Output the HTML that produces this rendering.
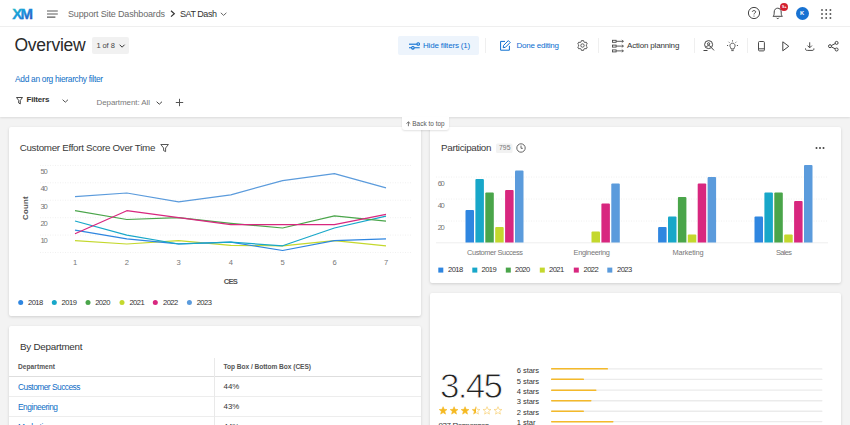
<!DOCTYPE html>
<html><head><meta charset="utf-8">
<style>
*{box-sizing:border-box;margin:0;padding:0}
html,body{width:850px;height:425px;overflow:hidden;background:#f3f3f3;font-family:"Liberation Sans",sans-serif;color:#333}
.abs{position:absolute}
#top{position:absolute;left:0;top:0;width:850px;height:27px;background:#fff;border-bottom:1px solid #efefef}
#hdr{position:absolute;left:0;top:27px;width:850px;height:90px;background:#fff;box-shadow:0 1px 2px rgba(0,0,0,.10)}
.t{position:absolute;white-space:nowrap;line-height:1}
.card{position:absolute;background:#fff;border-radius:2px;box-shadow:0 1px 3px rgba(0,0,0,.15)}
svg{position:absolute;overflow:visible}
.sep{position:absolute;width:1px;background:#efefef}
.hl{position:absolute;height:1px;background:#ededed}
</style></head><body>
<div id="hdr"></div>
<div id="top"></div>

<!-- top bar icons -->
<svg style="left:0;top:0" width="40" height="27"><defs><linearGradient id="lg" x1="0" y1="0" x2="1" y2="1"><stop offset="0.1" stop-color="#22bcc6"/><stop offset="0.5" stop-color="#1b93dd"/><stop offset="0.95" stop-color="#2a4cbc"/></linearGradient></defs><text x="12.3" y="18.9" font-family="Liberation Sans, sans-serif" font-weight="700" font-size="15" letter-spacing="-1.9" fill="url(#lg)" stroke="url(#lg)" stroke-width=".35">XM</text></svg>
<svg style="left:46.8px;top:9.5px" width="12" height="10"><path d="M0 1H10.8M0 4H10.8M0 7.1H8.4" stroke="#5a5a5a" stroke-width="1.15" fill="none"/></svg>
<svg style="left:169.5px;top:10px" width="6" height="8"><path d="M1 0.8L4.3 3.7L1 6.6" stroke="#333" stroke-width="1.2" fill="none"/></svg>
<svg style="left:220px;top:11.5px" width="8" height="6"><path d="M0.8 0.8L3.6 3.4L6.4 0.8" stroke="#666" stroke-width="1" fill="none"/></svg>
<!-- help -->
<svg style="left:747px;top:6.2px" width="14" height="14"><circle cx="7" cy="7" r="5.6" stroke="#444" stroke-width="1" fill="none"/><path d="M5.3 5.8C5.3 4.2 8.7 4.2 8.7 5.9C8.7 7 7 7 7 8.4" stroke="#444" stroke-width="1" fill="none"/><circle cx="7" cy="10" r=".6" fill="#444"/></svg>
<!-- bell -->
<svg style="left:772px;top:7px" width="12" height="13"><path d="M1 9.3C2.3 8.3 2.2 6.5 2.2 5C2.2 2.6 3.8 1.2 5.7 1.2C7.6 1.2 9.2 2.6 9.2 5C9.2 6.5 9.1 8.3 10.4 9.3Z" stroke="#444" stroke-width="1" fill="none" stroke-linejoin="round"/><path d="M4.5 10.8C4.9 11.8 6.5 11.8 6.9 10.8" stroke="#444" stroke-width="1" fill="none"/></svg>
<div class="abs" style="left:780.4px;top:2.8px;width:8px;height:8px;border-radius:50%;background:#d3202f"></div>
<div class="t" style="left:782px;top:4.8px;font-size:4px;font-weight:700;color:#fff">9+</div>
<!-- avatar -->
<div class="abs" style="left:795.8px;top:6.5px;width:13px;height:13px;border-radius:50%;background:#1872d2"></div>
<div class="t" style="left:800.1px;top:10.9px;font-size:5.8px;font-weight:700;color:#fff">K</div>
<!-- grid -->
<svg style="left:821px;top:8.6px" width="11" height="11"><g fill="#555"><circle cx="1" cy="1" r=".95"/><circle cx="5.2" cy="1" r=".95"/><circle cx="9.4" cy="1" r=".95"/><circle cx="1" cy="5" r=".95"/><circle cx="5.2" cy="5" r=".95"/><circle cx="9.4" cy="5" r=".95"/><circle cx="1" cy="9" r=".95"/><circle cx="5.2" cy="9" r=".95"/><circle cx="9.4" cy="9" r=".95"/></g></svg>

<!-- title row -->
<div class="abs" style="left:91.8px;top:37px;width:36.8px;height:16.6px;background:#f1f1f1;border-radius:2px"></div>
<svg style="left:119px;top:44px" width="8" height="6"><path d="M0.6 0.7L3.1 3.2L5.6 0.7" stroke="#333" stroke-width="1" fill="none"/></svg>

<!-- toolbar -->
<div class="abs" style="left:398px;top:36px;width:81px;height:19px;background:#edf4fc;border-radius:2px"></div>
<svg style="left:408.8px;top:41px" width="12" height="10"><g stroke="#0b6ed0" stroke-width="1.1" fill="none"><path d="M0 3.2H7.8"/><circle cx="9.2" cy="3" r="1.3"/><path d="M0 6.8H2.4M5.4 6.8H10.7"/><circle cx="3.9" cy="6.8" r="1.3"/></g></svg>
<div class="sep" style="left:485px;top:38px;height:15px;background:#efefef"></div>
<svg style="left:499.5px;top:40px" width="11" height="11"><g stroke="#0b6ed0" stroke-width="1" fill="none"><path d="M5 1.4H0.6V10.2H9.4V5.8"/><path d="M8.3 0.6L10.2 2.5L5.4 7.3L3.2 7.7L3.6 5.4Z" stroke-linejoin="round"/></g></svg>
<svg style="left:577.2px;top:40.3px" width="11" height="11"><g stroke="#555" stroke-width=".95" fill="none"><path d="M4.38 0.63L6.62 0.63L6.83 1.84L8.01 2.51L9.16 2.09L10.28 4.04L9.34 4.82L9.34 6.18L10.28 6.96L9.16 8.91L8.01 8.49L6.83 9.16L6.62 10.37L4.38 10.37L4.17 9.16L2.99 8.49L1.84 8.91L0.72 6.96L1.66 6.18L1.66 4.82L0.72 4.04L1.84 2.09L2.99 2.51L4.17 1.84Z" stroke-linejoin="round"/><circle cx="5.5" cy="5.5" r="1.7"/></g></svg>
<div class="sep" style="left:598px;top:38px;height:15px"></div>
<svg style="left:612.3px;top:39.8px" width="12" height="12"><g stroke="#4a4a4a" stroke-width=".9" fill="none"><rect x=".5" y=".3" width="3.6" height="2"/><rect x=".5" y="5.1" width="3.6" height="2"/><rect x=".5" y="9.9" width="3.6" height="2"/><path d="M4.1 1.3H11.4M4.1 6.1H11.4M4.1 10.9H11.4"/><path d="M9.8 0L11.4 1.3L9.8 2.6M9.8 4.8L11.4 6.1L9.8 7.4M9.8 9.6L11.4 10.9L9.8 12.2" stroke-width=".8"/></g></svg>
<div class="sep" style="left:694px;top:38px;height:15px"></div>
<svg style="left:703px;top:40px" width="12" height="12"><g stroke="#444" stroke-width="1" fill="none"><circle cx="5.6" cy="4.6" r="4"/><path d="M8.4 7.6L11 10.4"/><circle cx="5.6" cy="3.8" r="1.1"/><path d="M3.4 6.9C3.6 5.2 7.6 5.2 7.8 6.9"/><path d="M0.5 10.5H4.5"/></g></svg>
<svg style="left:727.3px;top:40.4px" width="12" height="13"><g stroke="#444" stroke-width=".9" fill="none"><path d="M4 9V8C2.3 6.6 2.6 3.2 5.5 3.2C8.4 3.2 8.7 6.6 7 8V9Z" stroke-linejoin="round"/><path d="M4.3 10.6H6.7M5.5 0.3V1.5M1.6 1.8L2.4 2.6M9.4 1.8L8.6 2.6M0 5.5H1.1M9.9 5.5H11"/></g></svg>
<div class="sep" style="left:747px;top:38px;height:15px"></div>
<svg style="left:758.1px;top:41px" width="8" height="12"><g stroke="#4a4a4a" stroke-width="1" fill="none"><rect x=".5" y=".5" width="5.9" height="9.4" rx="1"/><path d="M.5 7.8H6.4"/></g></svg>
<svg style="left:782.4px;top:40.5px" width="8" height="11"><path d="M0.8 0.8L6.8 5.3L0.8 9.8Z" stroke="#444" stroke-width="1" fill="none" stroke-linejoin="round"/></svg>
<svg style="left:805.2px;top:41.5px" width="10" height="10"><g stroke="#4a4a4a" stroke-width="1" fill="none"><path d="M4.7 0.3V5.6M2.5 3.6L4.7 5.8L6.9 3.6"/><path d="M0.5 6.4C0.5 8.2 1 8.4 2.4 8.4H7C8.4 8.4 8.9 8.2 8.9 6.4"/></g></svg>
<svg style="left:827.9px;top:40.8px" width="11" height="11"><g stroke="#444" stroke-width="1" fill="none"><circle cx="2" cy="5.2" r="1.5"/><circle cx="8.6" cy="1.9" r="1.5"/><circle cx="8.6" cy="8.5" r="1.5"/><path d="M3.4 4.5L7.2 2.6M3.4 5.9L7.2 7.8"/></g></svg>

<!-- filter row icons -->
<svg style="left:15.8px;top:96.9px" width="8" height="8"><path d="M0.5 0.5H6.5L4.3 3.4V6.9L2.7 6V3.4Z" stroke="#333" stroke-width=".9" fill="none" stroke-linejoin="round"/></svg>
<svg style="left:62px;top:98.5px" width="8" height="6"><path d="M0.6 0.7L3.3 3.2L6 0.7" stroke="#555" stroke-width="1" fill="none"/></svg>
<svg style="left:155.5px;top:100.5px" width="8" height="6"><path d="M0.6 0.7L3.3 3.2L6 0.7" stroke="#444" stroke-width="1" fill="none"/></svg>
<svg style="left:175px;top:98px" width="9" height="9"><path d="M4.5 0.8V8.2M0.8 4.5H8.2" stroke="#555" stroke-width="1" fill="none"/></svg>

<!-- cards -->
<div class="card" style="left:9px;top:127.4px;width:412.1px;height:188.7px"></div>
<div class="card" style="left:429.6px;top:127.4px;width:411.4px;height:155.9px"></div>
<div class="card" style="left:9px;top:326px;width:412px;height:120px"></div>
<div class="card" style="left:429.6px;top:292.9px;width:411.4px;height:150px"></div>
<!-- back to top tab -->
<div class="abs" style="left:401.8px;top:116.8px;width:47.6px;height:13.2px;background:#fff;border-radius:0 0 3px 3px;box-shadow:0 1px 2px rgba(0,0,0,.12)"></div>

<svg style="left:406px;top:120.6px" width="6" height="6"><path d="M2.4 5.2V0.9M0.5 2.7L2.4 0.8L4.3 2.7" stroke="#555" stroke-width=".8" fill="none"/></svg>
<!-- card1 chart -->
<svg style="left:0;top:0" width="425" height="425">
<g stroke="#f0f0f0" stroke-width="1" stroke-dasharray="1 1.5">
<path d="M40 165.4H411M40 182.8H411M40 200.2H411M40 217.7H411M40 235.1H411M40 252.5H411"/>
</g>
<g fill="none" stroke-width="1.2" stroke-linejoin="round" transform="translate(0,.5)">
<polyline stroke="#c4d82d" points="75,240.2 126.8,243.5 178.6,240.2 230.8,244.8 282.6,245.3 334.4,240.2 386,245.3"/>
<polyline stroke="#2f86e0" points="75,229.6 126.8,238.4 178.6,243.3 230.8,241.7 282.6,250 334.4,240.2 386,238.3"/>
<polyline stroke="#18a7c9" points="75,220.5 126.8,234.7 178.6,243.5 230.8,241.7 282.6,245.3 334.4,227.5 386,215.6"/>
<polyline stroke="#4aa54a" points="75,210.2 126.8,219 178.6,217.1 230.8,222.8 282.6,227.5 334.4,215.3 386,220.7"/>
<polyline stroke="#d8277f" points="75,233.2 126.8,210.2 178.6,217.1 230.8,224.1 282.6,224.1 334.4,224.1 386,213.8"/>
<polyline stroke="#5b9bdc" points="75,196.2 126.8,192.5 178.6,201.4 230.8,194.3 282.6,180.1 334.4,173.1 386,187.4"/>
</g>
<g>
<circle cx="20.7" cy="302.4" r="2.5" fill="#2f86e0"/>
<circle cx="54.3" cy="302.4" r="2.5" fill="#18a7c9"/>
<circle cx="88" cy="302.4" r="2.5" fill="#4aa54a"/>
<circle cx="122" cy="302.4" r="2.5" fill="#c4d82d"/>
<circle cx="155.3" cy="302.4" r="2.5" fill="#d8277f"/>
<circle cx="189.4" cy="302.4" r="2.5" fill="#5b9bdc"/>
</g>
<!-- filter icon in title -->
<path d="M160.8 144.5H168.4L165.6 148V151.6L163.6 150.6V148Z" stroke="#444" stroke-width=".9" fill="none" stroke-linejoin="round"/>
</svg>
<div class="t" style="left:26.1px;top:208.4px;font-size:7.8px;font-weight:700;color:#555;transform:translate(-50%,-50%) rotate(-90deg);letter-spacing:.25px">Count</div>

<!-- card2 chart -->
<svg style="left:0;top:0" width="850" height="425">
<g stroke="#f0f0f0" stroke-width="1" stroke-dasharray="1 1.5">
<path d="M436 177H828M436 199H828M436 221H828"/>
</g>
<path d="M436 242.8H828" stroke="#eeeeee" stroke-width="1"/>
<path d="M465.5 242.5V211.0Q465.5 210.0 466.5 210.0H473.0Q474.0 210.0 474.0 211.0V242.5Z" fill="#2f86e0"/>
<path d="M475.4 242.5V180.0Q475.4 179.0 476.4 179.0H482.9Q483.9 179.0 483.9 180.0V242.5Z" fill="#18a7c9"/>
<path d="M485.3 242.5V193.5Q485.3 192.5 486.3 192.5H492.8Q493.8 192.5 493.8 193.5V242.5Z" fill="#4aa54a"/>
<path d="M495.2 242.5V228.0Q495.2 227.0 496.2 227.0H502.7Q503.7 227.0 503.7 228.0V242.5Z" fill="#c4d82d"/>
<path d="M505.1 242.5V191.0Q505.1 190.0 506.1 190.0H512.6Q513.6 190.0 513.6 191.0V242.5Z" fill="#d8277f"/>
<path d="M515.0 242.5V171.5Q515.0 170.5 516.0 170.5H522.5Q523.5 170.5 523.5 171.5V242.5Z" fill="#5b9bdc"/>
<path d="M591.5 242.5V232.5Q591.5 231.5 592.5 231.5H599.0Q600.0 231.5 600.0 232.5V242.5Z" fill="#c4d82d"/>
<path d="M601.4 242.5V204.5Q601.4 203.5 602.4 203.5H608.9Q609.9 203.5 609.9 204.5V242.5Z" fill="#d8277f"/>
<path d="M611.3 242.5V184.5Q611.3 183.5 612.3 183.5H618.8Q619.8 183.5 619.8 184.5V242.5Z" fill="#5b9bdc"/>
<path d="M658.1 242.5V228.0Q658.1 227.0 659.1 227.0H665.6Q666.6 227.0 666.6 228.0V242.5Z" fill="#2f86e0"/>
<path d="M668.0 242.5V217.5Q668.0 216.5 669.0 216.5H675.5Q676.5 216.5 676.5 217.5V242.5Z" fill="#18a7c9"/>
<path d="M677.9 242.5V198.0Q677.9 197.0 678.9 197.0H685.4Q686.4 197.0 686.4 198.0V242.5Z" fill="#4aa54a"/>
<path d="M687.8 242.5V235.5Q687.8 234.5 688.8 234.5H695.3Q696.3 234.5 696.3 235.5V242.5Z" fill="#c4d82d"/>
<path d="M697.7 242.5V184.5Q697.7 183.5 698.7 183.5H705.2Q706.2 183.5 706.2 184.5V242.5Z" fill="#d8277f"/>
<path d="M707.6 242.5V178.0Q707.6 177.0 708.6 177.0H715.1Q716.1 177.0 716.1 178.0V242.5Z" fill="#5b9bdc"/>
<path d="M754.5 242.5V217.5Q754.5 216.5 755.5 216.5H762.0Q763.0 216.5 763.0 217.5V242.5Z" fill="#2f86e0"/>
<path d="M764.4 242.5V193.5Q764.4 192.5 765.4 192.5H771.9Q772.9 192.5 772.9 193.5V242.5Z" fill="#18a7c9"/>
<path d="M774.3 242.5V193.5Q774.3 192.5 775.3 192.5H781.8Q782.8 192.5 782.8 193.5V242.5Z" fill="#4aa54a"/>
<path d="M784.2 242.5V235.5Q784.2 234.5 785.2 234.5H791.7Q792.7 234.5 792.7 235.5V242.5Z" fill="#c4d82d"/>
<path d="M794.1 242.5V202.0Q794.1 201.0 795.1 201.0H801.6Q802.6 201.0 802.6 202.0V242.5Z" fill="#d8277f"/>
<path d="M804.0 242.5V166.0Q804.0 165.0 805.0 165.0H811.5Q812.5 165.0 812.5 166.0V242.5Z" fill="#5b9bdc"/>
<rect x="438.3" y="267.6" width="5" height="5" fill="#2f86e0"/>
<rect x="472.3" y="267.6" width="5" height="5" fill="#18a7c9"/>
<rect x="505.8" y="267.6" width="5" height="5" fill="#4aa54a"/>
<rect x="539.8" y="267.6" width="5" height="5" fill="#c4d82d"/>
<rect x="573.8" y="267.6" width="5" height="5" fill="#d8277f"/>
<rect x="607.3" y="267.6" width="5" height="5" fill="#5b9bdc"/>
<rect x="496" y="143.5" width="16.5" height="9.5" rx="1.5" fill="#f2f2f2"/>
<g stroke="#555" stroke-width=".9" fill="none"><circle cx="521" cy="148" r="4.2"/><path d="M521 145.6V148.3H522.8"/></g>
<g fill="#444"><circle cx="816.5" cy="148" r="1"/><circle cx="820" cy="148" r="1"/><circle cx="823.5" cy="148" r="1"/></g>
</svg>

<!-- card3 table -->
<div class="hl" style="left:9px;top:376px;width:412px;background:#dedede"></div>
<div class="hl" style="left:9px;top:396px;width:412px"></div>
<div class="hl" style="left:9px;top:416px;width:412px"></div>
<div class="sep" style="left:214.3px;top:357.5px;height:70px;background:#e9e9e9"></div>

<!-- card4 -->
<svg style="left:0;top:0" width="850" height="425">
<polygon points="443.10,406.70 444.16,409.34 447.00,409.53 444.81,411.36 445.51,414.12 443.10,412.60 440.69,414.12 441.39,411.36 439.20,409.53 442.04,409.34" fill="#f5b921" stroke="#f5b921" stroke-width=".6"/>
<polygon points="454.08,406.70 455.14,409.34 457.98,409.53 455.79,411.36 456.49,414.12 454.08,412.60 451.67,414.12 452.37,411.36 450.18,409.53 453.02,409.34" fill="#f5b921" stroke="#f5b921" stroke-width=".6"/>
<polygon points="465.06,406.70 466.12,409.34 468.96,409.53 466.77,411.36 467.47,414.12 465.06,412.60 462.65,414.12 463.35,411.36 461.16,409.53 464.00,409.34" fill="#f5b921" stroke="#f5b921" stroke-width=".6"/>
<clipPath id="hc"><rect x="471.04" y="400" width="5" height="20"/></clipPath>
<polygon points="476.04,406.50 477.16,409.26 480.13,409.47 477.85,411.39 478.57,414.28 476.04,412.70 473.51,414.28 474.23,411.39 471.95,409.47 474.92,409.26" fill="#f5b921" clip-path="url(#hc)"/>
<polygon points="476.04,406.70 477.10,409.34 479.94,409.53 477.75,411.36 478.45,414.12 476.04,412.60 473.63,414.12 474.33,411.36 472.14,409.53 474.98,409.34" fill="none" stroke="#f6c75a" stroke-width=".6"/>
<polygon points="487.02,406.70 488.08,409.34 490.92,409.53 488.73,411.36 489.43,414.12 487.02,412.60 484.61,414.12 485.31,411.36 483.12,409.53 485.96,409.34" fill="none" stroke="#f6c75a" stroke-width=".6"/>
<polygon points="498.00,406.70 499.06,409.34 501.90,409.53 499.71,411.36 500.41,414.12 498.00,412.60 495.59,414.12 496.29,411.36 494.10,409.53 496.94,409.34" fill="none" stroke="#f6c75a" stroke-width=".6"/>
<rect x="551" y="368.2" width="271.5" height="1.4" rx=".7" fill="#ebebeb"/>
<rect x="551" y="368.1" width="57.0" height="1.5" rx=".7" fill="#f4b92a"/>
<rect x="551" y="378.7" width="271.5" height="1.4" rx=".7" fill="#ebebeb"/>
<rect x="551" y="378.6" width="33.0" height="1.5" rx=".7" fill="#f4b92a"/>
<rect x="551" y="389.4" width="271.5" height="1.4" rx=".7" fill="#ebebeb"/>
<rect x="551" y="389.4" width="45.5" height="1.5" rx=".7" fill="#f4b92a"/>
<rect x="551" y="400.0" width="271.5" height="1.4" rx=".7" fill="#ebebeb"/>
<rect x="551" y="399.9" width="40.5" height="1.5" rx=".7" fill="#f4b92a"/>
<rect x="551" y="410.5" width="271.5" height="1.4" rx=".7" fill="#ebebeb"/>
<rect x="551" y="410.4" width="33.0" height="1.5" rx=".7" fill="#f4b92a"/>
<rect x="551" y="420.9" width="271.5" height="1.4" rx=".7" fill="#ebebeb"/>
<rect x="551" y="420.9" width="62.5" height="1.5" rx=".7" fill="#f4b92a"/>
</svg>

<div class="t" style="left:68.0px;top:9.6px;font-size:9px;color:#6a6a6a;letter-spacing:-0.16px;">Support Site Dashboards</div>
<div class="t" style="left:180.0px;top:9.6px;font-size:9px;color:#333;letter-spacing:-0.46px;">SAT Dash</div>
<div class="t" style="left:14.5px;top:36.7px;font-size:17.5px;color:#2a2a2a;letter-spacing:-0.25px;">Overview</div>
<div class="t" style="left:96.4px;top:41.8px;font-size:7.5px;color:#444;letter-spacing:-0.07px;">1 of 8</div>
<div class="t" style="left:15.0px;top:74.6px;font-size:8.4px;color:#0f6ec6;letter-spacing:-0.30px;">Add an org hierarchy filter</div>
<div class="t" style="left:26.5px;top:95.6px;font-size:8px;color:#333;font-weight:700;letter-spacing:-0.17px;">Filters</div>
<div class="t" style="left:96.5px;top:98.6px;font-size:8px;color:#7a7a7a;letter-spacing:-0.09px;">Department: All</div>
<div class="t" style="left:423.0px;top:41.6px;font-size:8px;color:#0b6ed0;letter-spacing:-0.17px;">Hide filters (1)</div>
<div class="t" style="left:516.5px;top:41.6px;font-size:8px;color:#0b6ed0;letter-spacing:-0.22px;">Done editing</div>
<div class="t" style="left:627.0px;top:41.6px;font-size:8px;color:#333;letter-spacing:-0.17px;">Action planning</div>
<div class="t" style="left:412.3px;top:120.9px;font-size:6.4px;color:#555;letter-spacing:0.04px;">Back to top</div>
<div class="t" style="left:19.7px;top:143.2px;font-size:9.8px;color:#3a3a3a;letter-spacing:-0.30px;">Customer Effort Score Over Time</div>
<div class="t" style="left:40.4px;top:167.8px;font-size:7.6px;color:#777;letter-spacing:-1.05px;">50</div>
<div class="t" style="left:40.4px;top:185.3px;font-size:7.6px;color:#777;letter-spacing:-1.05px;">40</div>
<div class="t" style="left:40.4px;top:202.6px;font-size:7.6px;color:#777;letter-spacing:-1.05px;">30</div>
<div class="t" style="left:40.4px;top:220.0px;font-size:7.6px;color:#777;letter-spacing:-1.05px;">20</div>
<div class="t" style="left:40.4px;top:237.3px;font-size:7.6px;color:#777;letter-spacing:-1.05px;">10</div>
<div class="t" style="left:73.0px;top:258.8px;font-size:7.6px;color:#777;letter-spacing:-0.23px;">1</div>
<div class="t" style="left:124.8px;top:258.8px;font-size:7.6px;color:#777;letter-spacing:-0.23px;">2</div>
<div class="t" style="left:176.6px;top:258.8px;font-size:7.6px;color:#777;letter-spacing:-0.23px;">3</div>
<div class="t" style="left:228.8px;top:258.8px;font-size:7.6px;color:#777;letter-spacing:-0.23px;">4</div>
<div class="t" style="left:280.6px;top:258.8px;font-size:7.6px;color:#777;letter-spacing:-0.23px;">5</div>
<div class="t" style="left:332.4px;top:258.8px;font-size:7.6px;color:#777;letter-spacing:-0.23px;">6</div>
<div class="t" style="left:384.0px;top:258.8px;font-size:7.6px;color:#777;letter-spacing:-0.23px;">7</div>
<div class="t" style="left:223.7px;top:277.5px;font-size:7.6px;color:#555;font-weight:700;letter-spacing:-0.76px;">CES</div>
<div class="t" style="left:28.0px;top:298.9px;font-size:7.6px;color:#333;letter-spacing:-0.54px;">2018</div>
<div class="t" style="left:61.6px;top:298.9px;font-size:7.6px;color:#333;letter-spacing:-0.54px;">2019</div>
<div class="t" style="left:95.2px;top:298.9px;font-size:7.6px;color:#333;letter-spacing:-0.54px;">2020</div>
<div class="t" style="left:129.4px;top:298.9px;font-size:7.6px;color:#333;letter-spacing:-0.54px;">2021</div>
<div class="t" style="left:163.0px;top:298.9px;font-size:7.6px;color:#333;letter-spacing:-0.54px;">2022</div>
<div class="t" style="left:196.7px;top:298.9px;font-size:7.6px;color:#333;letter-spacing:-0.54px;">2023</div>
<div class="t" style="left:441.0px;top:143.4px;font-size:9.8px;color:#3a3a3a;letter-spacing:-0.29px;">Participation</div>
<div class="t" style="left:499.0px;top:145.0px;font-size:6.8px;color:#777;letter-spacing:0.08px;">795</div>
<div class="t" style="left:437.8px;top:179.8px;font-size:7.6px;color:#777;letter-spacing:-1.45px;">60</div>
<div class="t" style="left:437.8px;top:201.8px;font-size:7.6px;color:#777;letter-spacing:-1.45px;">40</div>
<div class="t" style="left:437.8px;top:223.8px;font-size:7.6px;color:#777;letter-spacing:-1.45px;">20</div>
<div class="t" style="left:467.0px;top:249.1px;font-size:7.4px;color:#777;letter-spacing:-0.40px;">Customer Success</div>
<div class="t" style="left:573.5px;top:249.1px;font-size:7.4px;color:#777;letter-spacing:-0.30px;">Engineering</div>
<div class="t" style="left:672.5px;top:249.1px;font-size:7.4px;color:#777;letter-spacing:-0.18px;">Marketing</div>
<div class="t" style="left:776.0px;top:249.1px;font-size:7.4px;color:#777;letter-spacing:-0.62px;">Sales</div>
<div class="t" style="left:448.0px;top:266.3px;font-size:7.6px;color:#333;letter-spacing:-0.57px;">2018</div>
<div class="t" style="left:481.5px;top:266.3px;font-size:7.6px;color:#333;letter-spacing:-0.57px;">2019</div>
<div class="t" style="left:515.0px;top:266.3px;font-size:7.6px;color:#333;letter-spacing:-0.57px;">2020</div>
<div class="t" style="left:549.0px;top:266.3px;font-size:7.6px;color:#333;letter-spacing:-0.57px;">2021</div>
<div class="t" style="left:583.5px;top:266.3px;font-size:7.6px;color:#333;letter-spacing:-0.57px;">2022</div>
<div class="t" style="left:617.0px;top:266.3px;font-size:7.6px;color:#333;letter-spacing:-0.57px;">2023</div>
<div class="t" style="left:20.0px;top:341.7px;font-size:9.8px;color:#333;letter-spacing:-0.24px;">By Department</div>
<div class="t" style="left:18.0px;top:363.8px;font-size:6.6px;color:#555;font-weight:700;letter-spacing:0.04px;">Department</div>
<div class="t" style="left:223.5px;top:363.8px;font-size:6.6px;color:#555;font-weight:700;letter-spacing:-0.04px;">Top Box / Bottom Box (CES)</div>
<div class="t" style="left:18.0px;top:382.6px;font-size:8.4px;color:#0f6ec6;letter-spacing:-0.52px;">Customer Success</div>
<div class="t" style="left:223.5px;top:382.6px;font-size:7.9px;color:#333;letter-spacing:0.00px;">44%</div>
<div class="t" style="left:18.0px;top:402.6px;font-size:8.4px;color:#0f6ec6;letter-spacing:-0.47px;">Engineering</div>
<div class="t" style="left:223.5px;top:402.6px;font-size:7.9px;color:#333;letter-spacing:0.00px;">43%</div>
<div class="t" style="left:18.0px;top:422.6px;font-size:8.4px;color:#0f6ec6;letter-spacing:-0.35px;">Marketing</div>
<div class="t" style="left:223.5px;top:422.6px;font-size:7.9px;color:#333;letter-spacing:0.00px;">44%</div>
<div class="t" style="left:440.0px;top:368.1px;font-size:35px;color:#222;letter-spacing:-1.71px;-webkit-text-stroke:.9px #fff;">3.45</div>
<div class="t" style="left:438.5px;top:421.5px;font-size:8px;color:#333;letter-spacing:-0.42px;">937 Responses</div>
<div class="t" style="left:516.8px;top:367.1px;font-size:7.6px;color:#333;letter-spacing:-0.10px;">6 stars</div>
<div class="t" style="left:516.8px;top:377.5px;font-size:7.6px;color:#333;letter-spacing:-0.10px;">5 stars</div>
<div class="t" style="left:516.8px;top:387.8px;font-size:7.6px;color:#333;letter-spacing:-0.10px;">4 stars</div>
<div class="t" style="left:516.8px;top:398.2px;font-size:7.6px;color:#333;letter-spacing:-0.10px;">3 stars</div>
<div class="t" style="left:516.8px;top:408.6px;font-size:7.6px;color:#333;letter-spacing:-0.10px;">2 stars</div>
<div class="t" style="left:516.8px;top:418.7px;font-size:7.6px;color:#333;letter-spacing:-0.06px;">1 star</div>
</body></html>
